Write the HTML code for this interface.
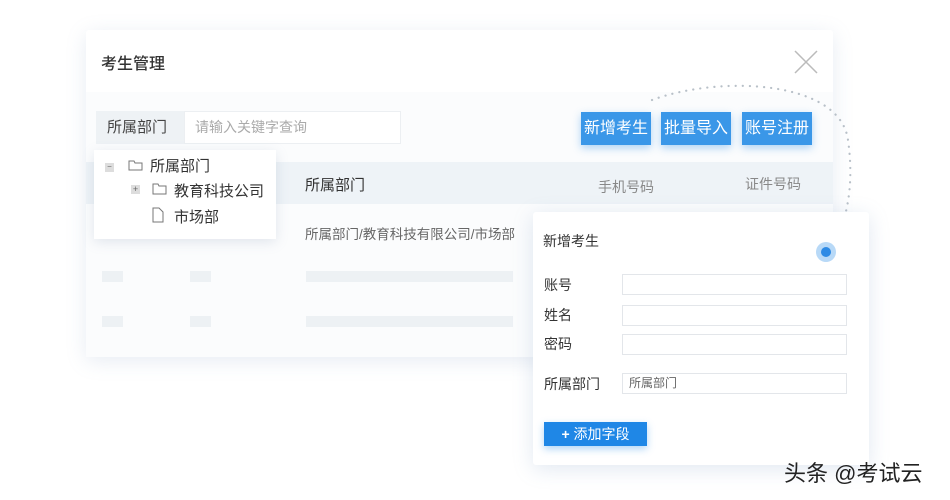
<!DOCTYPE html>
<html><head><meta charset="utf-8"><style>
*{margin:0;padding:0;box-sizing:border-box}
body{width:950px;height:500px;background:#fff;position:relative;overflow:hidden;font-family:"Liberation Sans","Noto Sans CJK SC",sans-serif;color:#333}
.a{position:absolute}
.card{left:86px;top:30px;width:747px;height:327px;background:#fff;box-shadow:0 4px 20px rgba(120,150,190,.18);border-radius:3px}
.btn{background:#3a97e8;color:#fff;font-size:16px;height:33px;line-height:33px;text-align:center;box-shadow:0 3px 8px rgba(58,151,232,.4)}
.bar{background:#edf1f4;height:11px}
.inp{left:622px;width:225px;height:21px;border:1px solid #e3e6ea;background:#fff}
.lbl{font-size:14px;left:544px}
</style></head><body>
<div class="a card"></div>
<div class="a" style="left:86px;top:92px;width:747px;height:265px;background:#fbfcfd"></div>
<div class="a" style="left:101px;top:50px;font-size:16px;font-weight:500;color:#333">考生管理</div>
<svg class="a" style="left:794px;top:50px" width="24" height="24"><path d="M1 1L23 23M23 1L1 23" stroke="#bbb" stroke-width="1.5"/></svg>
<div class="a" style="left:96px;top:111px;width:88px;height:33px;background:#eef2f5;font-size:15px;line-height:33px;padding-left:11px;color:#444">所属部门</div>
<div class="a" style="left:184px;top:111px;width:217px;height:33px;background:#fff;border:1px solid #eceff2;font-size:14px;line-height:31px;padding-left:10px;color:#aaa">请输入关键字查询</div>
<div class="a btn" style="left:581px;top:112px;width:70px">新增考生</div>
<div class="a btn" style="left:661px;top:112px;width:70px">批量导入</div>
<div class="a btn" style="left:742px;top:112px;width:70px">账号注册</div>
<div class="a" style="left:86px;top:162px;width:747px;height:42px;background:#eef3f7"></div>
<div class="a" style="left:305px;top:174px;font-size:15px">所属部门</div>
<div class="a" style="left:598px;top:177px;font-size:14px;color:#888">手机号码</div>
<div class="a" style="left:745px;top:174px;font-size:14px;color:#888">证件号码</div>
<div class="a" style="left:305px;top:223px;font-size:13.5px;color:#666">所属部门/教育科技有限公司/市场部</div>
<div class="a bar" style="left:102px;top:271px;width:21px"></div>
<div class="a bar" style="left:190px;top:271px;width:21px"></div>
<div class="a bar" style="left:306px;top:271px;width:207px"></div>
<div class="a bar" style="left:102px;top:316px;width:21px"></div>
<div class="a bar" style="left:190px;top:316px;width:21px"></div>
<div class="a bar" style="left:306px;top:316px;width:207px"></div>
<div class="a" style="left:94px;top:150px;width:182px;height:89px;background:#fff;box-shadow:0 3px 12px rgba(120,140,170,.2)"></div>
<div class="a" style="left:105px;top:163px;width:9px;height:9px;background:#ddd;font-size:8px;line-height:8px;text-align:center;color:#666">−</div>
<svg class="a" style="left:128px;top:158px" width="16" height="14"><path d="M1 3h5l1 2h7v7H1z" fill="none" stroke="#777"/></svg>
<div class="a" style="left:150px;top:155px;font-size:15px">所属部门</div>
<div class="a" style="left:131px;top:185px;width:9px;height:9px;background:#ddd;font-size:9px;line-height:9px;text-align:center;color:#666">+</div>
<svg class="a" style="left:152px;top:182px" width="16" height="14"><path d="M1 2h5l1 2h7v8H1z" fill="none" stroke="#777"/></svg>
<div class="a" style="left:174px;top:180px;font-size:15px">教育科技公司</div>
<svg class="a" style="left:152px;top:207px" width="12" height="16"><path d="M1 1h6l4 4v10H1z" fill="none" stroke="#777"/></svg>
<div class="a" style="left:174px;top:206px;font-size:15px">市场部</div>
<svg class="a" style="left:640px;top:80px" width="230" height="180"><path d="M12 20 C80 -5 200 0 208 60 C215 110 205 140 195 165" fill="none" stroke="#b8c0c8" stroke-width="2.2" stroke-dasharray="0.1 7" stroke-linecap="round"/></svg>
<div class="a" style="left:533px;top:212px;width:336px;height:253px;background:#fff;box-shadow:0 4px 20px rgba(120,150,190,.22);border-radius:3px"></div>
<div class="a" style="left:816px;top:242px;width:20px;height:20px;border-radius:50%;background:#b8d9f7"></div>
<div class="a" style="left:821px;top:247px;width:10px;height:10px;border-radius:50%;background:#2d8ae5"></div>
<div class="a" style="left:543px;top:231px;font-size:14px">新增考生</div>
<div class="a lbl" style="top:275px">账号</div>
<div class="a lbl" style="top:305px">姓名</div>
<div class="a lbl" style="top:334px">密码</div>
<div class="a lbl" style="top:374px">所属部门</div>
<div class="a inp" style="top:274px"></div>
<div class="a inp" style="top:305px"></div>
<div class="a inp" style="top:334px"></div>
<div class="a inp" style="top:373px;font-size:12px;line-height:19px;padding-left:6px;color:#666">所属部门</div>
<div class="a btn" style="left:544px;top:422px;width:103px;height:24px;line-height:24px;font-size:14px;background:#1f87e6"><b>+</b> 添加字段</div>
<div class="a" style="left:784px;top:456px;font-size:22px;color:#222">头条 @考试云</div>
</body></html>
